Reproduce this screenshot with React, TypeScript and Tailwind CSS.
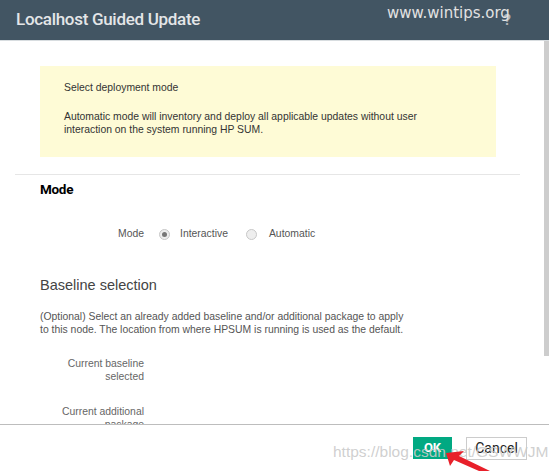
import React from "react";

function Radio({ checked }: { checked?: boolean }) {
  return (
    <span className="w-[11px] h-[11px] rounded-full border border-[#c8c8c8] bg-[#eeeeee] flex items-center justify-center">
      {checked && <span className="w-[5px] h-[5px] rounded-full bg-[#777777]" />}
    </span>
  );
}

export default function App() {
  return (
    <div className="w-[549px] h-[471px] flex flex-col bg-white relative overflow-hidden" style={{ fontFamily: '"Liberation Sans", Arial, sans-serif' }}>
      {/* header */}
      <div className="h-[40px] bg-[#425563] flex items-center justify-between pl-[16px] pr-[38px] relative">
        <div className="text-[#e4e6e8] text-[17px] font-medium tracking-[-0.3px]" style={{ fontFamily: "Roboto, sans-serif" }}>
          Localhost Guided Update
        </div>
        <div className="text-[#b0b4b8] text-[15px] font-bold" style={{ fontFamily: "Roboto, sans-serif" }}>?</div>
        <div className="absolute left-[387px] top-[2px] text-[15px] text-[#e2e2e2]" style={{ fontFamily: '"DejaVu Sans", sans-serif' }}>
          www.wintips.org
        </div>
      </div>

      {/* body */}
      <div className="flex-1 flex min-h-0 border-t border-[#d8dde0]">
        <div className="flex-1 overflow-hidden">
          <div className="ml-[40px] mr-[48px] mt-[25px] h-[91px] bg-[#fefbd6] px-[24px] pt-[15px] text-[10.4px] leading-[13px] text-[#333]">
            <div>Select deployment mode</div>
            <div className="mt-[16px]">
              Automatic mode will inventory and deploy all applicable updates without user
              <br />
              interaction on the system running HP SUM.
            </div>
          </div>

          <div className="ml-[15px] mr-[24px] mt-[17px] border-t border-[#e6e6e6]" />

          <div className="ml-[40px] mt-[5px] text-[13.5px] leading-[18px] font-bold text-black tracking-[-0.3px]" style={{ fontFamily: "Roboto, sans-serif" }}>
            Mode
          </div>

          <div className="ml-[40px] mt-[29px] flex items-center text-[10.4px] leading-[14px] text-[#555]">
            <div className="w-[104px] text-right">Mode</div>
            <div className="ml-[15px]"><Radio checked /></div>
            <div className="ml-[10px]">Interactive</div>
            <div className="ml-[18px]"><Radio /></div>
            <div className="ml-[12px]">Automatic</div>
          </div>

          <div className="ml-[40px] mt-[35px] text-[14.5px] leading-[18px] text-[#444]">Baseline selection</div>

          <div className="ml-[40px] mt-[16px] text-[10.4px] leading-[13px] text-[#555]">
            (Optional) Select an already added baseline and/or additional package to apply
            <br />
            to this node. The location from where HPSUM is running is used as the default.
          </div>

          <div className="ml-[40px] mt-[22px] w-[104px] text-right text-[10.4px] leading-[12.5px] text-[#666]">
            Current baseline
            <br />
            selected
          </div>

          <div className="ml-[40px] mt-[23px] w-[104px] text-right text-[10.4px] leading-[12.5px] text-[#666]">
            Current additional
            <br />
            package
          </div>
        </div>
        <div className="w-[5px] flex flex-col">
          <div className="h-[315px] bg-[#cdcdcd]" />
        </div>
      </div>

      {/* footer */}
      <div className="h-[47px] border-t border-[#bdbdbd] bg-white flex items-center justify-end pr-[22px] gap-[14px] relative">
        <button className="w-[39px] h-[22px] bg-[#01a982] text-white text-[13px] font-bold" style={{ fontFamily: "Roboto, sans-serif" }}>
          OK
        </button>
        <button className="w-[61px] h-[23px] border border-[#cccccc] bg-white text-[#222] text-[14px]" style={{ fontFamily: "Roboto, sans-serif" }}>
          Cancel
        </button>
      </div>

      {/* watermark + arrow */}
      <div className="absolute left-[333px] top-[440px] text-[15.5px] text-[#cacaca]/90 pointer-events-none">
        https://blog.csdn.net/GSWWJM
      </div>
      <svg className="absolute left-[438px] top-[446px]" width="56" height="25" viewBox="0 0 56 25">
        <polygon points="8,7 26,5 21,10 52,25 41,25 16,14 12,20" fill="#e8202a" />
      </svg>
    </div>
  );
}
